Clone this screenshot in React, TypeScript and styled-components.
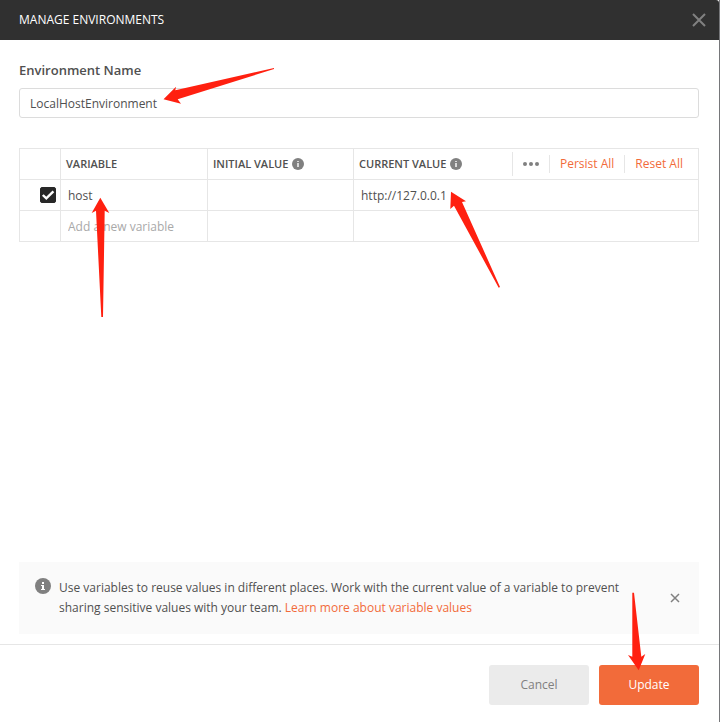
import React from "react";
import styled, { createGlobalStyle } from "styled-components";

const GlobalStyle = createGlobalStyle`
  *, *::before, *::after { box-sizing: border-box; }
  body {
    margin: 0;
    background: #ffffff;
    color: #505050;
    font-family: "Open Sans", "Noto Sans", sans-serif;
    font-size: 12px;
    line-height: 20px;
  }
  button, input { font: inherit; color: inherit; }
`;

const Dialog = styled.div`
  display: flex;
  flex-direction: column;
  min-height: 100vh;
  border-right: 1px solid #76777a;
  background: #ffffff;
`;

const Header = styled.header`
  display: flex;
  align-items: center;
  justify-content: space-between;
  height: 40px;
  padding: 0 13px 0 19px;
  border-radius: 0 3px 0 0;
  background: #303030;
`;

const Title = styled.h1`
  margin: 0;
  color: #ffffff;
  font-size: 12px;
  font-weight: 400;
`;

const IconButton = styled.button`
  display: inline-flex;
  align-items: center;
  justify-content: center;
  padding: 0;
  border: 0;
  background: none;
  color: #808080;
  cursor: pointer;
`;

const Body = styled.main`
  display: flex;
  flex: 1;
  flex-direction: column;
  padding: 20px 20px 10px 19px;
`;

const FieldLabel = styled.label`
  margin-bottom: 8px;
  font-size: 13px;
  font-weight: 600;
`;

const Anchor = styled.div`
  position: relative;
`;

const NameInput = styled.input`
  display: block;
  width: 100%;
  height: 30px;
  padding: 0 10px;
  border: 1px solid #dcdcdc;
  border-radius: 3px;
  background: #ffffff;
  outline: none;
`;

const Table = styled.table`
  width: 100%;
  margin: 30px 0;
  border-collapse: collapse;
  table-layout: fixed;
`;

const Col = styled.col<{ $width?: number }>`
  width: ${({ $width }) => ($width ? `${$width}px` : "auto")};
`;

const HeadCell = styled.th`
  height: 31px;
  padding: 0 0 0 5px;
  border: 1px solid #e6e6e6;
  font-size: 11px;
  font-weight: 600;
  text-align: left;
`;

const HeadContent = styled.div`
  display: flex;
  align-items: center;
  gap: 4px;
  white-space: nowrap;
`;

const Cell = styled.td`
  height: 31px;
  padding: 0;
  border: 1px solid #e6e6e6;
`;

const CellInput = styled.input`
  display: block;
  width: 100%;
  height: 30px;
  padding: 0 7px;
  border: 0;
  background: none;
  outline: none;
  &::placeholder { color: #a9a9a9; opacity: 1; }
`;

const CheckLabel = styled.label`
  display: grid;
  justify-content: end;
  align-items: center;
  padding-right: 4px;
  & > * { grid-area: 1 / 1; }
`;

const Checkbox = styled.input`
  appearance: none;
  width: 16px;
  height: 16px;
  margin: 0;
  border: 1px solid #c4c4c4;
  border-radius: 2px;
  background: #ffffff;
  &:checked { border-color: #282828; background: #282828; }
  & + svg { visibility: hidden; pointer-events: none; }
  &:checked + svg { visibility: visible; }
`;

const Tools = styled.div`
  display: flex;
  align-items: center;
  margin-left: auto;
  padding-right: 5px;
  font-size: 12px;
  font-weight: 400;
`;

const ToolSlot = styled.div<{ $tall?: boolean }>`
  display: flex;
  align-items: center;
  height: ${({ $tall }) => ($tall ? 24 : 18)}px;
  padding: 0 10px;
  border-left: 1px solid #e6e6e6;
`;

const TextButton = styled.button`
  padding: 0;
  border: 0;
  background: none;
  color: #f26b3a;
  line-height: 20px;
  cursor: pointer;
`;

const Notice = styled.aside`
  display: flex;
  gap: 8px;
  margin-top: auto;
  padding: 16px;
  background: #fafafa;
`;

const NoticeText = styled.p`
  flex: 1;
  max-width: 580px;
  margin: 0;
`;

const NoticeClose = styled(IconButton)`
  align-self: center;
  margin-left: auto;
  width: 16px;
  height: 16px;
`;

const Link = styled.a`
  color: #f26b3a;
  text-decoration: none;
`;

const Footer = styled.footer`
  display: flex;
  justify-content: flex-end;
  gap: 10px;
  padding: 20px 20px 17px;
  border-top: 1px solid #e6e6e6;
`;

const Button = styled.button<{ $primary?: boolean }>`
  width: 100px;
  height: 40px;
  padding: 0;
  border: 0;
  border-radius: 3px;
  background: ${({ $primary }) => ($primary ? "#f26b3a" : "#ebebeb")};
  color: ${({ $primary }) => ($primary ? "#ffffff" : "#808080")};
  cursor: pointer;
`;

const ArrowSvg = styled.svg<{ $left: number; $top: number }>`
  position: absolute;
  z-index: 1;
  left: ${({ $left }) => $left}px;
  top: ${({ $top }) => $top}px;
  pointer-events: none;
`;

type ArrowProps = { left: number; top: number; width: number; height: number; points: string };

const Arrow = ({ left, top, width, height, points }: ArrowProps) => (
  <ArrowSvg $left={left} $top={top} width={width} height={height} viewBox={`0 0 ${width} ${height}`} aria-hidden="true">
    <polygon points={points} fill="#ff2010" />
  </ArrowSvg>
);

const CrossIcon = ({ size, stroke }: { size: number; stroke: number }) => (
  <svg width={size} height={size} viewBox={`0 0 ${size} ${size}`} fill="none" stroke="currentColor" strokeWidth={stroke} aria-hidden="true">
    <path d={`M1 1L${size - 1} ${size - 1}M${size - 1} 1L1 ${size - 1}`} />
  </svg>
);

const InfoIcon = () => (
  <svg width="16" height="16" viewBox="0 0 16 16" aria-hidden="true">
    <circle cx="8" cy="8" r="8" fill="#808080" />
    <path d="M7 4h2v2H7zM6 7h3v4h1v1H6v-1h1V8H6z" fill="#ffffff" />
  </svg>
);

const SmallInfoIcon = () => (
  <svg width="12" height="12" viewBox="0 0 12 12" aria-hidden="true">
    <circle cx="6" cy="6" r="6" fill="#808080" />
    <path d="M5 3h2v1H5zM5 5h2v4H5z" fill="#d8d8d8" />
  </svg>
);

const CheckIcon = () => (
  <svg width="16" height="16" viewBox="0 0 16 16" fill="none" aria-hidden="true">
    <path d="M2.8 8L6.3 11.4L13.4 4.4" stroke="#ffffff" strokeWidth="2.4" />
  </svg>
);

const DotsIcon = () => (
  <svg width="16" height="4" viewBox="0 0 16 4" fill="#808080" aria-hidden="true">
    <circle cx="2" cy="2" r="2" />
    <circle cx="8" cy="2" r="2" />
    <circle cx="14" cy="2" r="2" />
  </svg>
);

export default function App() {
  return (
    <>
      <GlobalStyle />
      <Dialog role="dialog" aria-labelledby="dialog-title">
        <Header>
          <Title id="dialog-title">MANAGE ENVIRONMENTS</Title>
          <IconButton aria-label="Close">
            <CrossIcon size={14} stroke={2} />
          </IconButton>
        </Header>

        <Body>
          <FieldLabel htmlFor="environment-name">Environment Name</FieldLabel>
          <Anchor>
            <NameInput id="environment-name" defaultValue="LocalHostEnvironment" />
            <Arrow left={141} top={-22} width={116} height={40} points="3.5,33.3 16,20.7 15.3,24.3 114,2 114,3 17.7,33.3 21,37.7" />
          </Anchor>

          <Table>
            <colgroup>
              <Col $width={41} />
              <Col $width={147} />
              <Col $width={146} />
              <Col />
            </colgroup>
            <thead>
              <tr>
                <HeadCell aria-label="Enabled" />
                <HeadCell scope="col">VARIABLE</HeadCell>
                <HeadCell scope="col">
                  <HeadContent>
                    INITIAL VALUE <SmallInfoIcon />
                  </HeadContent>
                </HeadCell>
                <HeadCell scope="col">
                  <HeadContent>
                    CURRENT VALUE <SmallInfoIcon />
                    <Tools>
                      <ToolSlot $tall>
                        <IconButton aria-label="More options">
                          <DotsIcon />
                        </IconButton>
                      </ToolSlot>
                      <ToolSlot>
                        <TextButton>Persist All</TextButton>
                      </ToolSlot>
                      <ToolSlot>
                        <TextButton>Reset All</TextButton>
                      </ToolSlot>
                    </Tools>
                  </HeadContent>
                </HeadCell>
              </tr>
            </thead>
            <tbody>
              <tr>
                <Cell>
                  <CheckLabel>
                    <Checkbox type="checkbox" defaultChecked aria-label="Enable host" />
                    <CheckIcon />
                  </CheckLabel>
                </Cell>
                <Cell>
                  <Anchor>
                    <CellInput aria-label="Variable" defaultValue="host" />
                    <Arrow left={29} top={16} width={22} height={122} points="10.3,1.7 1.7,17 6,14.7 11.3,121 13,121 14.7,14.7 19.3,17" />
                  </Anchor>
                </Cell>
                <Cell>
                  <CellInput aria-label="Initial value" />
                </Cell>
                <Cell>
                  <Anchor>
                    <CellInput aria-label="Current value" defaultValue="http://127.0.0.1" />
                    <Arrow left={95} top={10} width={52} height={99} points="2,1.7 17,11.3 13,12 51,97 49.7,97.7 5,15.7 1.3,19" />
                  </Anchor>
                </Cell>
              </tr>
              <tr>
                <Cell />
                <Cell>
                  <CellInput aria-label="New variable" placeholder="Add a new variable" />
                </Cell>
                <Cell>
                  <CellInput aria-label="New initial value" />
                </Cell>
                <Cell>
                  <CellInput aria-label="New current value" />
                </Cell>
              </tr>
            </tbody>
          </Table>

          <Notice>
            <InfoIcon />
            <NoticeText>
              Use variables to reuse values in different places. Work with the current value of a variable to prevent
              sharing sensitive values with your team. <Link href="#variable-values">Learn more about variable values</Link>
            </NoticeText>
            <NoticeClose aria-label="Dismiss">
              <CrossIcon size={10} stroke={1.5} />
            </NoticeClose>
          </Notice>
        </Body>

        <Footer>
          <Button>Cancel</Button>
          <Anchor>
            <Button $primary>Update</Button>
            <Arrow left={28} top={-74} width={20} height={80} points="5.3,1.7 7,1.7 14.3,65.7 18.3,63 11.7,79.3 1,64 5.3,65.7" />
          </Anchor>
        </Footer>
      </Dialog>
    </>
  );
}
